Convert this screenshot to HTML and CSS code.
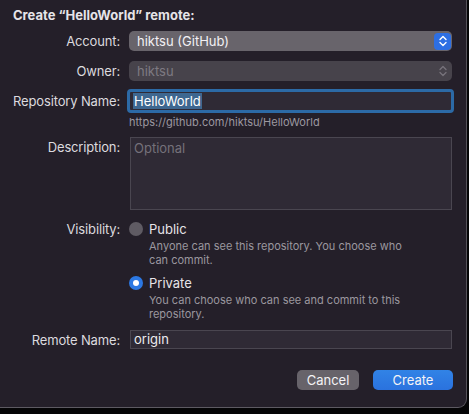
FILE: index.html
```html
<!DOCTYPE html>
<html>
<head>
<meta charset="utf-8">
<link rel="stylesheet" href="styles.css">
</head>
<body>
<div class="window">
  <h1 class="title">Create “HelloWorld” remote:</h1>
  <div class="form">
    <div class="row row-account">
      <span class="label">Account:</span>
      <div class="popup">
        <span class="popup-text">hiktsu (GitHub)</span>
        <span class="stepper">
          <svg width="10" height="12" viewBox="0 0 10 12"><path d="M2 4.5 L5 1.5 L8 4.5 M2 7.5 L5 10.5 L8 7.5" fill="none" stroke="#fff" stroke-width="1.4" stroke-linecap="round" stroke-linejoin="round"/></svg>
        </span>
      </div>
    </div>
    <div class="row row-owner">
      <span class="label">Owner:</span>
      <div class="popup popup-disabled">
        <span class="popup-text">hiktsu</span>
        <span class="stepper stepper-disabled">
          <svg width="10" height="12" viewBox="0 0 10 12"><path d="M2 4.5 L5 1.5 L8 4.5 M2 7.5 L5 10.5 L8 7.5" fill="none" stroke="#77737b" stroke-width="1.3" stroke-linecap="round" stroke-linejoin="round"/></svg>
        </span>
      </div>
    </div>
    <div class="row row-repo">
      <span class="label">Repository Name:</span>
      <div class="field field-focus"><span class="selected">HelloWorld</span></div>
    </div>
    <div class="row row-url">
      <span></span>
      <span class="hint">https://github.com/hiktsu/HelloWorld</span>
    </div>
    <div class="row row-desc">
      <span class="label label-top">Description:</span>
      <div class="field textarea"><span class="placeholder">Optional</span></div>
    </div>
    <div class="row row-vis">
      <span class="label">Visibility:</span>
      <div class="radio-group">
        <div class="radio"><span class="dot"></span><span class="radio-label">Public</span></div>
        <p class="radio-desc">Anyone can see this repository. You choose who<br>can commit.</p>
        <div class="radio radio-private"><span class="dot dot-on"></span><span class="radio-label">Private</span></div>
        <p class="radio-desc">You can choose who can see and commit to this<br>repository.</p>
      </div>
    </div>
    <div class="row row-remote">
      <span class="label">Remote Name:</span>
      <div class="field field-plain">origin</div>
    </div>
  </div>
  <div class="buttons">
    <button class="btn btn-cancel">Cancel</button>
    <button class="btn btn-create">Create</button>
  </div>
</div>
</body>
</html>
```

FILE: styles.css
```css
* { box-sizing: border-box; }
html, body { margin: 0; padding: 0; }
body {
  background: #050506;
  width: 469px;
  height: 414px;
  overflow: hidden;
  font-family: Inter, "Liberation Sans", sans-serif;
  font-size: 13px;
  color: #dedce0;
}
.window {
  width: 467px;
  height: 408px;
  background: #241f29;
  border-right: 1px solid #55525a;
  border-bottom: 1px solid #5d5a62;
  border-bottom-right-radius: 9px;
  padding-top: 7px;
}
.title {
  margin: 0 0 0 13px;
  font-size: 13px;
  font-weight: 700;
  line-height: 16px;
  color: #e6e4e8;
}
.form {
  display: flex;
  flex-direction: column;
}
.row {
  display: grid;
  grid-template-columns: 120px 323px;
  column-gap: 9px;
  align-items: center;
}
.label {
  text-align: right;
  line-height: 16px;
  color: #dcdadf;
  letter-spacing: -0.15px;
}
.label-top { align-self: start; padding-top: 2px; }
.row-account { margin-top: 8px; }
.row-owner { margin-top: 10px; }
.row-repo { margin-top: 8px; }
.row-url { margin-top: 2px; }
.row-desc { margin-top: 8px; }
.row-vis { margin-top: 11px; align-items: start; }
.row-remote { margin-top: 9px; }

.popup {
  height: 20px;
  border-radius: 5px;
  background: #68646b;
  display: flex;
  align-items: center;
  justify-content: space-between;
  padding: 0 1px 0 8px;
  color: #f2f0f4;
}
.popup-disabled { background: #47434b; color: #7e7a82; }
.stepper {
  width: 17px;
  height: 17px;
  border-radius: 4px;
  background: #2d6fe3;
  display: flex;
  align-items: center;
  justify-content: center;
}
.stepper-disabled { background: transparent; }

.field {
  background: #2f2a35;
  border: 1px solid #4a4650;
  margin-left: 1px;
  line-height: 16px;
}
.field-focus {
  margin-left: -2px;
  width: 327px;
  height: 24px;
  border: 3px solid #2c6aa6;
  border-radius: 4px;
  padding: 1px 0 0 3px;
  color: #fff;
}
.selected {
  background: #3e6790;
  color: #fff;
  padding: 0 1px;
}
.hint {
  font-size: 11px;
  line-height: 14px;
  color: #9c98a0;
}
.textarea {
  height: 73px;
  align-self: start;
  padding: 2px 3px;
}
.placeholder { color: #75717a; }
.field-plain {
  height: 19px;
  padding: 0 3px;
  line-height: 17px;
  color: #ecebee;
}

.radio-group { display: flex; flex-direction: column; }
.radio {
  display: flex;
  align-items: center;
  height: 16px;
  color: #e6e4e8;
}
.radio-private { margin-top: 8px; }
.dot {
  width: 14px;
  height: 14px;
  border-radius: 50%;
  background: #5f5b63;
  margin-right: 6px;
  display: flex;
  align-items: center;
  justify-content: center;
}
.dot-on { background: #2c78e3; }
.dot-on::after {
  content: "";
  width: 6px;
  height: 6px;
  border-radius: 50%;
  background: #fff;
}
.radio-label { line-height: 16px; }
.radio-desc {
  margin: 2px 0 0 20px;
  font-size: 11px;
  line-height: 14px;
  color: #9b979f;
}

.buttons {
  display: flex;
  justify-content: flex-end;
  gap: 14px;
  margin-top: 21px;
  padding-right: 13px;
}
.btn {
  font-family: inherit;
  font-size: 13px;
  height: 20px;
  border: 0;
  border-radius: 5px;
  padding: 0;
  color: #f4f3f6;
  line-height: 20px;
}
.btn-cancel { width: 62px; background: #67636a; }
.btn-create { width: 80px; background: linear-gradient(#3183e6, #2a72de); }
```
